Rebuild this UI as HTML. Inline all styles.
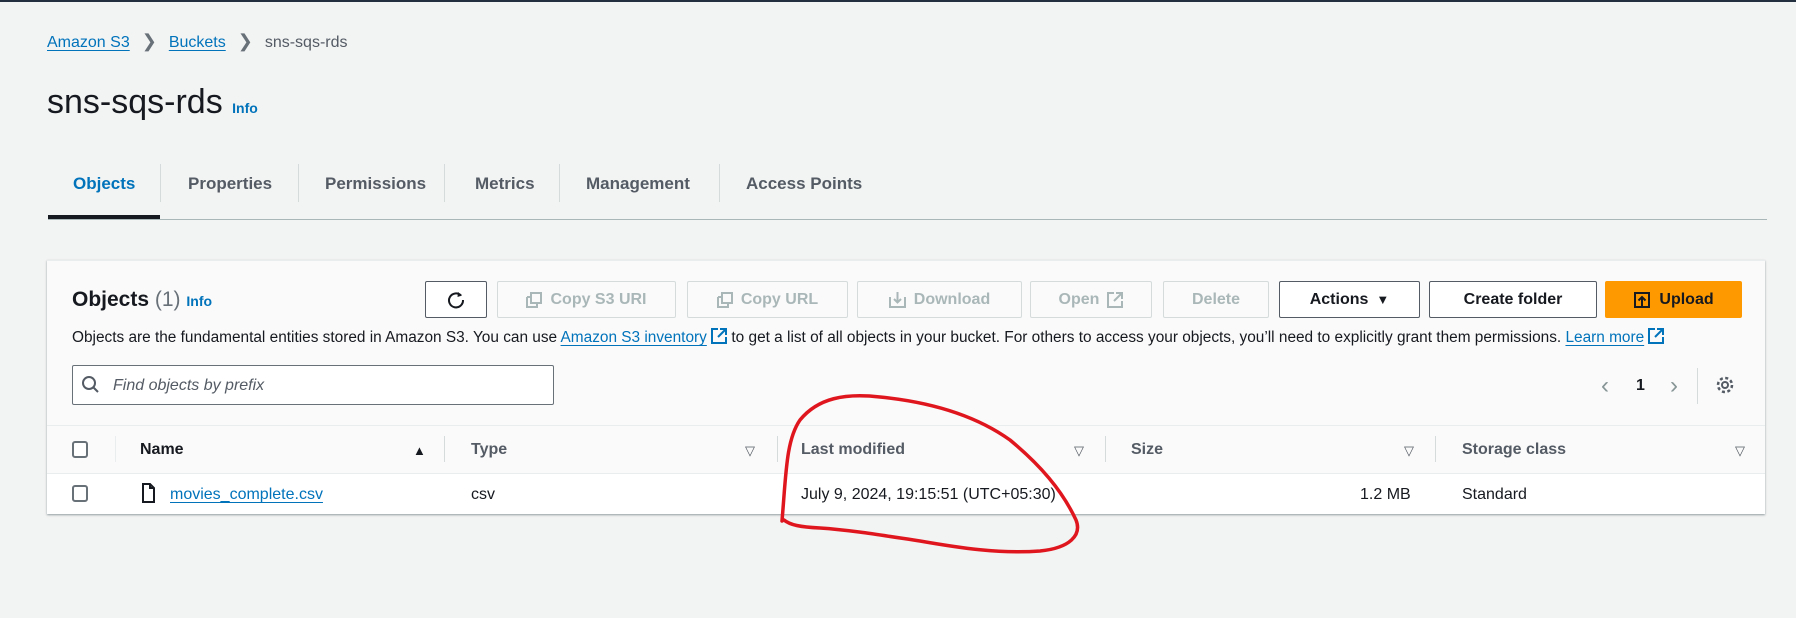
<!DOCTYPE html>
<html><head><meta charset="utf-8"><style>
*{box-sizing:border-box;margin:0;padding:0}
body{width:1796px;height:618px;background:#f2f3f3;font-family:"Liberation Sans",sans-serif;color:#16191f;position:relative;overflow:hidden;font-size:15px}
.a{position:absolute;white-space:nowrap}
.lnk{color:#0073bb;text-decoration:underline;text-underline-offset:3px}
.tab{position:absolute;top:174px;font-size:17px;font-weight:bold;color:#545b64}
.sep{position:absolute;top:164px;width:1px;height:38px;background:#d5dbdb}
.btn{position:absolute;top:281px;height:37px;border:1px solid #d5dbdb;border-radius:2px;background:#fafafa;color:#aab7b8;font-weight:bold;font-size:16px;display:flex;align-items:center;justify-content:center;gap:8px}
.btn.on{border-color:#545b64;color:#16191f;background:#fff}
.th{position:absolute;top:441px;font-weight:bold;font-size:16px;color:#16191f}
.tri{position:absolute;top:443px;font-size:13px;color:#545b64}
.cs{position:absolute;top:436px;width:1px;height:26px;background:#d5dbdb}
.cb{position:absolute;width:16px;height:17px;border:2px solid #687078;border-radius:3px;background:#fff}
.ext{display:inline-block;vertical-align:-2px}
</style></head><body>
<div class="a" style="left:0;top:0;width:1796px;height:2px;background:#232f3e"></div>
<div class="a" style="top:31px;left:47px;font-size:16px"><span class="lnk">Amazon S3</span><span style="color:#687078;margin:0 12px;font-size:18px">&#x276F;</span><span class="lnk">Buckets</span><span style="color:#687078;margin:0 12px;font-size:18px">&#x276F;</span><span style="color:#545b64">sns-sqs-rds</span></div>
<div class="a" style="top:83px;left:47px;font-size:34px">sns-sqs-rds <span style="font-size:14px;font-weight:bold;color:#0073bb">Info</span></div>
<div class="tab" style="left:73px;color:#0073bb">Objects</div>
<div class="tab" style="left:188px">Properties</div>
<div class="tab" style="left:325px">Permissions</div>
<div class="tab" style="left:475px">Metrics</div>
<div class="tab" style="left:586px">Management</div>
<div class="tab" style="left:746px">Access Points</div>
<div class="sep" style="left:160px"></div><div class="sep" style="left:298px"></div><div class="sep" style="left:444px"></div><div class="sep" style="left:559px"></div><div class="sep" style="left:719px"></div>
<div class="a" style="left:48px;top:219px;width:1719px;height:1px;background:#aab7b8"></div>
<div class="a" style="left:48px;top:215px;width:112px;height:4px;background:#16191f"></div>

<div class="a" style="left:47px;top:260px;width:1718px;height:254px;background:#fafafa;box-shadow:0 1px 2px rgba(0,28,36,.4);border-top:1px solid #eaeded"></div>
<div class="a" style="left:72px;top:288px;font-size:21px;font-weight:bold">Objects <span style="font-weight:normal;color:#687078">(1)</span> <span style="font-size:14px;color:#0073bb">Info</span></div>
<div class="btn on" style="left:425px;width:62px"><svg width="20" height="20" viewBox="0 0 20 20"><path d="M15 5.5A7 7 0 1 0 17 10" fill="none" stroke="#16191f" stroke-width="2"/><path d="M12 2l4 3.5-4.5 1.5z" fill="#16191f"/></svg></div>
<div class="btn" style="left:497px;width:179px"><svg width="16" height="16" viewBox="0 0 16 16"><path d="M5 1h10v10H5z M1 5h4 M1 5v10h10v-4" fill="none" stroke="#aab7b8" stroke-width="2"/></svg>Copy S3 URI</div>
<div class="btn" style="left:687px;width:161px"><svg width="16" height="16" viewBox="0 0 16 16"><path d="M5 1h10v10H5z M1 5h4 M1 5v10h10v-4" fill="none" stroke="#aab7b8" stroke-width="2"/></svg>Copy URL</div>
<div class="btn" style="left:857px;width:165px"><svg width="17" height="17" viewBox="0 0 17 17"><path d="M1 6v10h15V6 M8.5 1v10 M5 8l3.5 3.5L12 8" fill="none" stroke="#aab7b8" stroke-width="2"/></svg>Download</div>
<div class="btn" style="left:1030px;width:122px">Open <svg width="16" height="16" viewBox="0 0 16 16"><path d="M7 1H1v14h14V9 M9 1h6v6 M15 1L7 9" fill="none" stroke="#aab7b8" stroke-width="2"/></svg></div>
<div class="btn" style="left:1163px;width:106px">Delete</div>
<div class="btn on" style="left:1279px;width:141px">Actions <span style="font-size:13px">&#x25BC;</span></div>
<div class="btn on" style="left:1429px;width:168px">Create folder</div>
<div class="btn" style="left:1605px;width:137px;background:#ff9900;border-color:#ff9900;color:#16191f"><svg width="18" height="18" viewBox="0 0 18 18"><rect x="2" y="2" width="14" height="14" fill="none" stroke="#16191f" stroke-width="2"/><path d="M9 15V6M5.5 9.5L9 6l3.5 3.5" fill="none" stroke="#16191f" stroke-width="2"/></svg>Upload</div>
<div class="a" style="left:72px;top:328px;font-size:15.4px;color:#16191f">Objects are the fundamental entities stored in Amazon S3. You can use <span class="lnk">Amazon S3 inventory</span> <svg class="ext" width="16" height="16" viewBox="0 0 16 16"><path d="M7 1H1v14h14V9 M9 1h6v6 M15 1L7 9" fill="none" stroke="#0073bb" stroke-width="2"/></svg> to get a list of all objects in your bucket. For others to access your objects, you’ll need to explicitly grant them permissions. <span class="lnk">Learn more</span> <svg class="ext" width="16" height="16" viewBox="0 0 16 16"><path d="M7 1H1v14h14V9 M9 1h6v6 M15 1L7 9" fill="none" stroke="#0073bb" stroke-width="2"/></svg></div>
<div class="a" style="left:72px;top:365px;width:482px;height:40px;border:1px solid #687078;border-radius:2px;background:#fff"></div>
<svg class="a" style="left:81px;top:375px" width="20" height="20" viewBox="0 0 20 20"><circle cx="8" cy="8" r="6" fill="none" stroke="#545b64" stroke-width="2"/><path d="M12.5 12.5L17 17" stroke="#545b64" stroke-width="2"/></svg>
<div class="a" style="left:113px;top:377px;font-style:italic;color:#545b64;font-size:16px">Find objects by prefix</div>
<div class="a" style="left:1601px;top:372px;font-size:24px;color:#879596">&#x2039;</div>
<div class="a" style="left:1636px;top:377px;font-size:16px;font-weight:bold">1</div>
<div class="a" style="left:1670px;top:372px;font-size:24px;color:#879596">&#x203A;</div>
<div class="a" style="left:1697px;top:368px;width:1px;height:36px;background:#d5dbdb"></div>
<svg class="a" style="left:1715px;top:375px" width="20" height="20" viewBox="0 0 20 20"><circle cx="10" cy="10" r="3" fill="none" stroke="#545b64" stroke-width="2"/><circle cx="10" cy="10" r="7" fill="none" stroke="#545b64" stroke-width="2.5" stroke-dasharray="3 2.5"/></svg>

<div class="a" style="left:47px;top:425px;width:1718px;height:1px;background:#eaeded"></div>
<div class="a" style="left:47px;top:473px;width:1718px;height:41px;background:#fff;border-top:1px solid #eaeded"></div>
<div class="cb" style="left:72px;top:441px"></div>
<div class="cs" style="left:115px;background:#eaeded"></div>
<div class="th" style="left:140px">Name</div><div class="tri" style="left:413px;color:#16191f">&#x25B2;</div><div class="cs" style="left:444px"></div>
<div class="th" style="left:471px;color:#545b64">Type</div><div class="tri" style="left:745px">&#x25BD;</div><div class="cs" style="left:777px"></div>
<div class="th" style="left:801px;color:#545b64">Last modified</div><div class="tri" style="left:1074px">&#x25BD;</div><div class="cs" style="left:1105px"></div>
<div class="th" style="left:1131px;color:#545b64">Size</div><div class="tri" style="left:1404px">&#x25BD;</div><div class="cs" style="left:1435px"></div>
<div class="th" style="left:1462px;color:#545b64">Storage class</div><div class="tri" style="left:1735px">&#x25BD;</div>
<div class="cb" style="left:72px;top:485px"></div>
<svg class="a" style="left:141px;top:483px" width="15" height="20" viewBox="0 0 15 20"><path d="M2 1h7l4 4v14H2z M9 1v4h4" fill="none" stroke="#16191f" stroke-width="2"/></svg>
<div class="a lnk" style="left:170px;top:486px;font-size:16px">movies_complete.csv</div>
<div class="a" style="left:471px;top:486px;font-size:16px">csv</div>
<div class="a" style="left:801px;top:486px;font-size:16px">July 9, 2024, 19:15:51 (UTC+05:30)</div>
<div class="a" style="left:1360px;top:486px;font-size:16px">1.2 MB</div>
<div class="a" style="left:1462px;top:486px;font-size:16px">Standard</div>

<svg class="a" style="left:0;top:0" width="1796" height="618"><path d="M782 521 C786 475 786 440 800 420 C818 398 845 393 880 397 C930 402 975 415 1010 440 C1040 465 1062 490 1076 520 C1082 535 1070 548 1040 551 C1000 554 960 548 920 541 C880 535 850 530 820 528 C800 527 790 525 784 520" fill="none" stroke="#e0161e" stroke-width="3.5" stroke-linecap="round"/></svg>
</body></html>
